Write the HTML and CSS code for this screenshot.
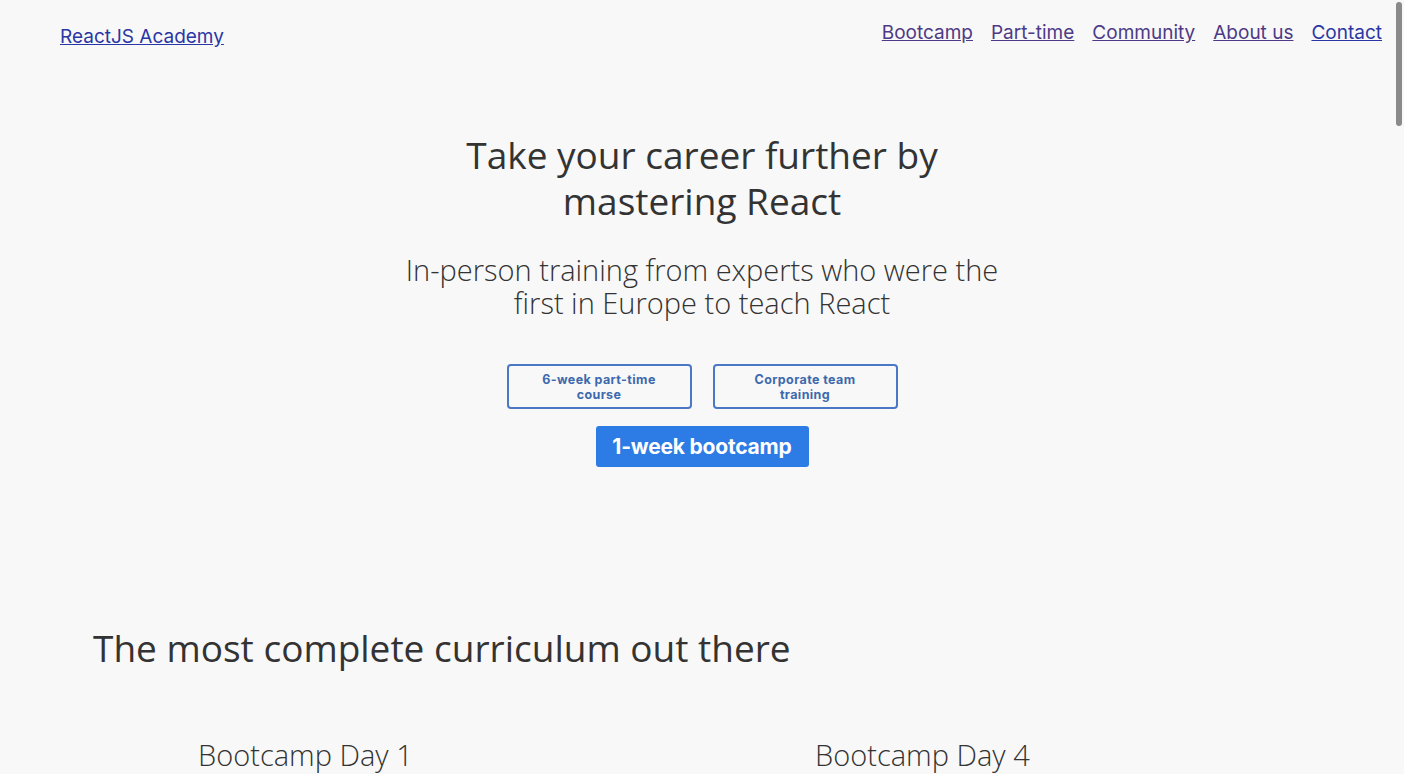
FILE: index.html
```html
<!DOCTYPE html>
<html>
<head>
  <meta http-equiv="CONTENT-TYPE" content="text/html; charset=UTF-8">
  <meta name="viewport" content="width=device-width, initial-scale=1.0"/>
  <title>ReactJS Academy</title>
  <link rel="stylesheet" href="styles.css">
</head>
<body>
  <header class="header">
    <a class="logo" href="#">ReactJS Academy</a>
    <nav class="nav">
      <a class="visited" href="#">Bootcamp</a>
      <a class="visited" href="#">Part-time</a>
      <a class="visited" href="#">Community</a>
      <a class="visited" href="#">About us</a>
      <a href="#">Contact</a>
    </nav>
  </header>

  <section class="hero">
    <h1>Take your career further by<br>mastering React</h1>
    <p class="subtitle">In-person training from experts who were the<br>first in Europe to teach React</p>
    <div class="hero-buttons">
      <button type="button" class="btn-outline">6-week part-time<br>course</button>
      <button type="button" class="btn-outline">Corporate team<br>training</button>
    </div>
    <button type="button" class="btn-primary">1-week bootcamp</button>
  </section>

  <section class="curriculum">
    <h2>The most complete curriculum out there</h2>
    <div class="days">
      <div class="day">
        <h3>Bootcamp Day 1</h3>
        <ul>
          <li>Thinking in React</li>
          <li>Modern JavaScript</li>
          <li>JSX and components</li>
        </ul>
      </div>
      <div class="day">
        <h3>Bootcamp Day 4</h3>
        <ul>
          <li>Styling in React</li>
          <li>Hooks in depth</li>
          <li>Testing</li>
        </ul>
      </div>
    </div>
  </section>

  <div class="scroll-thumb"></div>
</body>
</html>
```

FILE: styles.css
```css
html::-webkit-scrollbar {
  width: 0;
  height: 0;
}
html {
  scrollbar-width: none;
}
body {
  margin: 0;
  background: #f8f8f8;
  color: #333;
  font-family: "Open Sans", sans-serif;
  min-height: 4300px;
}

.header {
  display: flex;
  justify-content: space-between;
  align-items: flex-start;
  padding: 21px 22px 0 60px;
  height: 39px;
}
.logo, .nav a {
  font-family: Inter, "Liberation Sans", sans-serif;
  font-size: 19px;
  color: #2a36a4;
}
.logo {
  margin-top: 4px;
}
.nav {
  display: flex;
  gap: 18px;
}
.nav a.visited {
  color: #4e3a86;
}

.hero {
  text-align: center;
}
h1 {
  margin: 72px 0 0;
  font-size: 37px;
  font-weight: 400;
  line-height: 46px;
}
.subtitle {
  margin: 29px 0 0;
  font-size: 29px;
  font-weight: 300;
  line-height: 33px;
}
.hero-buttons {
  display: flex;
  justify-content: center;
  gap: 21px;
  margin-top: 45px;
}
.btn-outline {
  width: 185px;
  height: 45px;
  background: transparent;
  border: 2px solid #4a78c4;
  border-radius: 4px;
  color: #3d69ad;
  font-family: Inter, "Liberation Sans", sans-serif;
  font-size: 12.5px;
  font-weight: 700;
  letter-spacing: 0.4px;
  line-height: 15px;
}
.btn-primary {
  margin-top: 17px;
  width: 213px;
  height: 41px;
  border: none;
  border-radius: 3px;
  background: #2d7be5;
  color: white;
  font-family: Inter, "Liberation Sans", sans-serif;
  font-size: 21px;
  font-weight: 700;
  letter-spacing: -0.2px;
}

.curriculum {
  padding: 0 0 0 93px;
}
h2 {
  margin: 158px 0 0;
  font-size: 37px;
  font-weight: 400;
  line-height: 46px;
}
.days {
  display: grid;
  grid-template-columns: 617px 617px;
  margin-top: 67px;
}
.day {
  padding-left: 105px;
}
h3 {
  margin: 0;
  font-size: 29px;
  font-weight: 300;
  line-height: 34px;
}
.day ul {
  font-size: 18px;
  font-weight: 300;
}

.scroll-thumb {
  position: fixed;
  top: 2px;
  right: 2px;
  width: 6px;
  height: 124px;
  border-radius: 4px;
  background: #8a8a8a;
}
```
